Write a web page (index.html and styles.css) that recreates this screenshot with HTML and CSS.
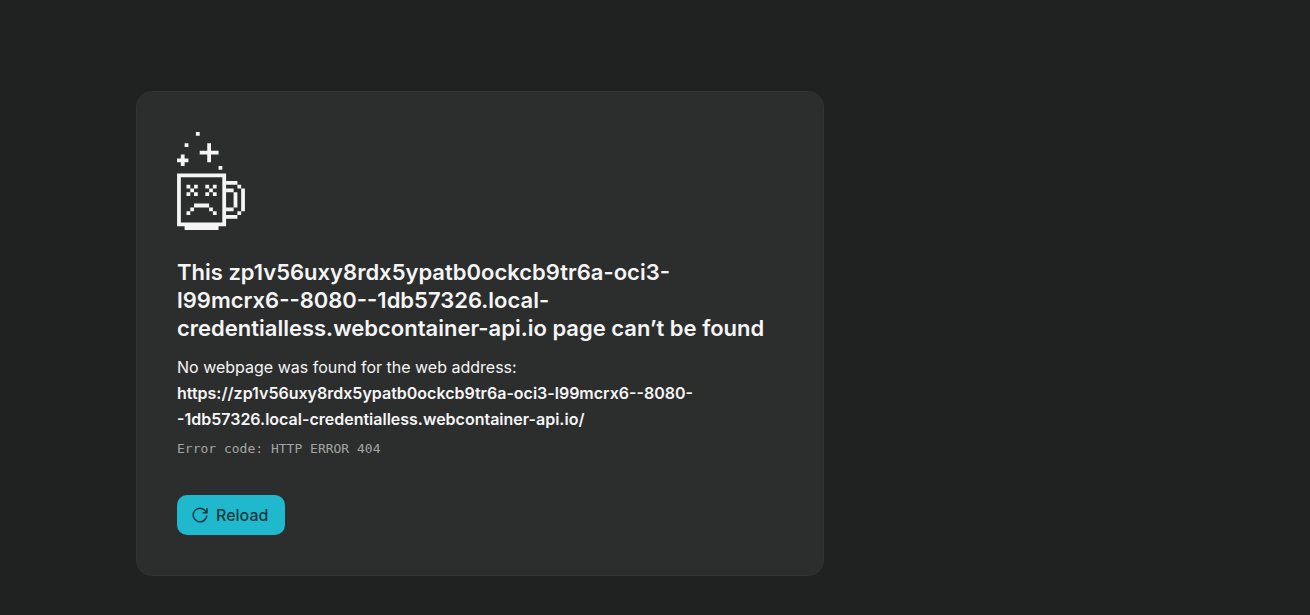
FILE: index.html
```html
<!DOCTYPE html>
<html lang="en">
<head>
<meta charset="utf-8">
<meta name="viewport" content="width=device-width, initial-scale=1">
<title>Page can’t be found</title>
<link rel="stylesheet" href="styles.css">
</head>
<body>
<main class="card">
  <svg class="mug" viewBox="0 0 18 26" aria-hidden="true" fill="currentColor">
    <path d="M5 0h1v1H5zM2 3h1v1H2zM8 3h1v2h2v1H9v2H8V6H6V5h2zM1 6h1v1h1v1H2v1H1V8H0V7h1zM11 9h1v1h-1z"/>
    <path fill-rule="evenodd" d="M0 11h13v14h-2v1H2v-1H0zM1 12v12h11V12z"/>
    <path d="M2.500 14h1v1h1v-1h1v1h-1v1h1v1h-1v-1h-1v1h-1v-1h1v-1h-1zM7.500 14h1v1h1v-1h1v1h-1v1h1v1h-1v-1h-1v1h-1v-1h1v-1h-1z"/>
    <path d="M4.500 19h4v1h-4zM3.500 20h1v1h-1zM8.500 20h1v1h-1zM2.500 21h1v1h-1zM9.500 21h1v1h-1z"/>
    <path d="M13 13h3v1h-3zM16 14h1v1h-1zM17 15h1v6h-1zM16 21h1v1h-1zM13 22h3v1h-3zM13 15h2v1h-2zM15 16h1v4h-1zM13 20h2v1h-2z"/>
  </svg>
  <h1 class="title">This zp1v56uxy8rdx5ypatb0ockcb9tr6a-oci3-<br>l99mcrx6--8080--1db57326.local-<br>credentialless.webcontainer-api.io page can’t be found</h1>
  <p class="message">No webpage was found for the web address:<br><strong class="address">https://zp1v56uxy8rdx5ypatb0ockcb9tr6a-oci3-l99mcrx6--8080-<br>-1db57326.local-credentialless.webcontainer-api.io/</strong></p>
  <p class="code">Error code: HTTP ERROR 404</p>
  <button class="reload" type="button">
    <svg class="reload-icon" viewBox="0 0 16 16" aria-hidden="true" fill="none" stroke="currentColor" stroke-width="1.500"><path d="M14.800 8.500A6.800 6.800 0 1 1 13.500 4L15 5.500M15 1v4.800h-4.500"/></svg>
    Reload
  </button>
</main>
</body>
</html>
```
FILE: styles.css
```css
* {
  box-sizing: border-box;
}

body {
  margin: 0;
  padding: 91px 24px 39px 136px;
  background: #202221;
  color: #f5f5f5;
  font-family: Inter, "Liberation Sans", sans-serif;
}

.card {
  max-width: 688px;
  padding: 40px;
  border: 1px solid #323434;
  border-radius: 16px;
  background: #2c2e2e;
  overflow-wrap: anywhere;
}

.mug {
  display: block;
  width: 68px;
  height: 98px;
}

.title {
  margin: 28px 0 12px;
  font-size: 22px;
  font-weight: 600;
  line-height: 28px;
}

.message {
  margin: 0;
  font-size: 16px;
  line-height: 26px;
}

.address {
  font-weight: 600;
}

.code {
  margin: 6px 0 35px;
  color: #a3a4a3;
  font-family: "DejaVu Sans Mono", "Liberation Mono", monospace;
  font-size: 13px;
  line-height: 22px;
}

.reload {
  display: flex;
  align-items: center;
  gap: 8px;
  height: 40px;
  padding: 0 17px 0 15px;
  border: 0;
  border-radius: 10px;
  background: #20b8cd;
  color: #133b40;
  font: 500 16px/24px Inter, "Liberation Sans", sans-serif;
  cursor: pointer;
}

.reload-icon {
  width: 16px;
  height: 16px;
}
```
